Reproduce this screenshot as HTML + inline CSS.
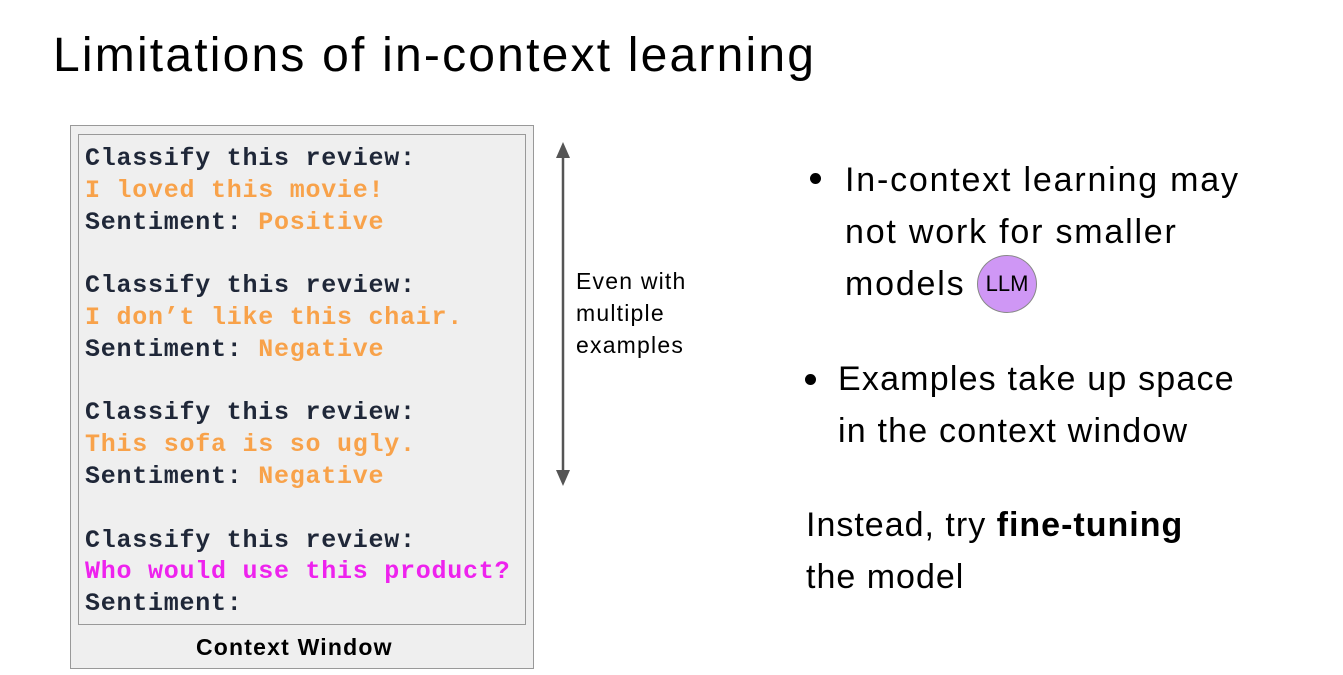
<!DOCTYPE html>
<html><head><meta charset="utf-8"><style>
body{margin:0;width:1343px;height:675px;background:#fff;position:relative;overflow:hidden;font-family:"Liberation Sans",sans-serif;color:#000}
.a{position:absolute;white-space:nowrap}
.m{font-family:"Liberation Mono",monospace;font-weight:bold;font-size:25px;color:#1f2738;letter-spacing:0.75px;line-height:31.8px}
.o{color:#f8a24a}.p{color:#ee22ee}
.r{font-size:34px;letter-spacing:1px;line-height:52px}
</style></head><body>
<div class="a" style="left:53px;top:28px;font-size:48px;letter-spacing:2.2px">Limitations of in-context learning</div>
<div class="a" style="left:70px;top:125px;width:464px;height:544px;border:1px solid #999;background:#efefef;box-sizing:border-box"></div>
<div class="a" style="left:78px;top:134px;width:448px;height:491px;border:1px solid #999;box-sizing:border-box"></div>
<div class="a m" style="left:85px;top:143px">Classify this review:<br><span class="o">I loved this movie!</span><br>Sentiment: <span class="o">Positive</span><br><br>Classify this review:<br><span class="o">I don’t like this chair.</span><br>Sentiment: <span class="o">Negative</span><br><br>Classify this review:<br><span class="o">This sofa is so ugly.</span><br>Sentiment: <span class="o">Negative</span><br><br>Classify this review:<br><span class="p">Who would use this product?</span><br>Sentiment:</div>
<div class="a" style="left:196px;top:634px;font-size:23px;font-weight:bold;letter-spacing:1.2px">Context Window</div>
<svg class="a" style="left:552px;top:140px" width="22" height="348"><line x1="11" y1="12" x2="11" y2="334" stroke="#555" stroke-width="2.5"/><path d="M4 18L11 2L18 18Z" fill="#555"/><path d="M4 330L11 346L18 330Z" fill="#555"/></svg>
<div class="a" style="left:576px;top:265px;font-size:23px;line-height:32px;letter-spacing:1.2px">Even with<br>multiple<br>examples</div>
<div class="a" style="left:810px;top:173px;width:11px;height:11px;border-radius:50%;background:#000"></div>
<div class="a r" style="left:845px;top:154px;letter-spacing:1.8px">In-context learning may<br>not work for smaller<br>models</div>
<div class="a" style="left:977px;top:255px;width:60px;height:58px;border-radius:50%;background:#cf97f5;border:1px solid #888;box-sizing:border-box;text-align:center;line-height:56px;font-size:22px">LLM</div>
<div class="a" style="left:805px;top:374px;width:11px;height:11px;border-radius:50%;background:#000"></div>
<div class="a r" style="left:838px;top:353px;letter-spacing:1.2px">Examples take up space<br>in the context window</div>
<div class="a r" style="left:806px;top:499px;letter-spacing:1px">Instead, try <b>fine-tuning</b><br>the model</div>
</body></html>
